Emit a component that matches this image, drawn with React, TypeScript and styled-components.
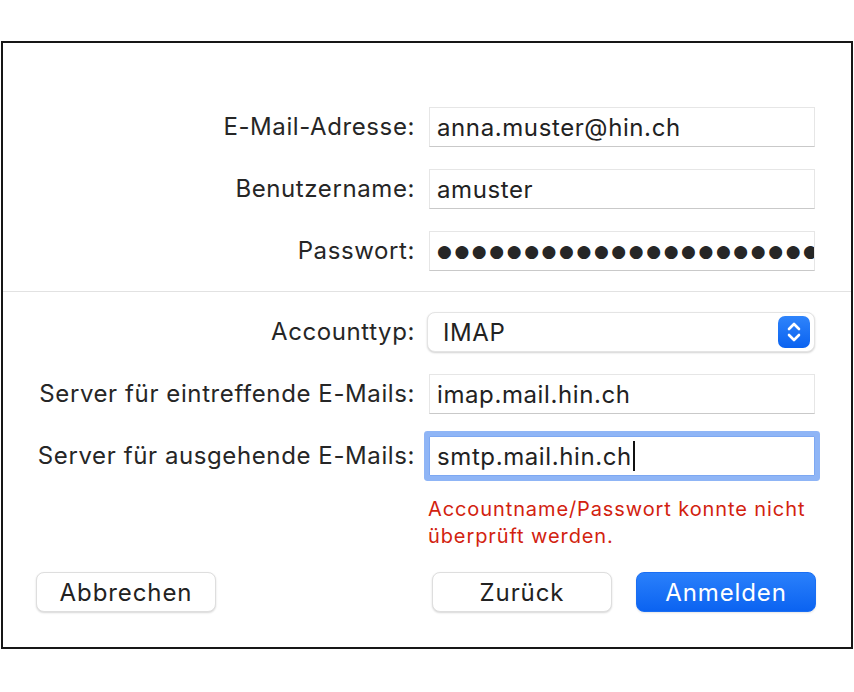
import React from "react";
import styled, { createGlobalStyle } from "styled-components";

const GlobalStyle = createGlobalStyle`
    body {
        margin: 0;
        background: #ffffff;
        font-family: Inter, "Liberation Sans", sans-serif;
        color: #262626;
    }
`;

const Frame = styled.div`
    box-sizing: border-box;
    width: 852px;
    height: 608px;
    margin: 41px 0 0 1px;
    border: 2px solid #161616;
    display: flex;
    flex-direction: column;
`;

const Form = styled.div<{ top: number }>`
    display: grid;
    grid-template-columns: 412px 386px;
    column-gap: 14px;
    row-gap: 22px;
    align-items: center;
    padding-top: ${props => props.top}px;
`;

const Label = styled.div`
    text-align: right;
    font-size: 24px;
    letter-spacing: 0.6px;
    line-height: 40px;
    white-space: nowrap;
`;

const Field = styled.div<{ focused?: boolean }>`
    box-sizing: border-box;
    height: 40px;
    padding: 0 7px;
    display: flex;
    align-items: center;
    background: #ffffff;
    border: 1px solid #e6e6e6;
    border-bottom-color: #c9c9c9;
    font-size: 24px;
    letter-spacing: 0.6px;
    color: #222222;
    overflow: hidden;
    white-space: nowrap;
    ${props =>
        props.focused &&
        `
        border-color: #7da8f2;
        box-shadow: 0 0 0 5px #8fb5f6;
        border-radius: 1px;
    `}
`;

const Dots = styled.span`
    font-family: "DejaVu Sans", sans-serif;
    font-size: 17px;
    letter-spacing: 2.6px;
    color: #262626;
`;

const Caret = styled.span`
    display: inline-block;
    width: 2px;
    height: 30px;
    background: #111111;
    margin-left: 1px;
`;

const Divider = styled.div`
    height: 1px;
    background: #e2e2e2;
    margin-top: 20px;
`;

const Popup = styled.div`
    box-sizing: border-box;
    height: 40px;
    margin-left: -2px;
    padding: 0 4px 0 15px;
    display: flex;
    align-items: center;
    justify-content: space-between;
    background: #ffffff;
    border: 1px solid #e4e4e4;
    border-radius: 8px;
    box-shadow: 0 1px 2px rgba(0, 0, 0, 0.18);
    font-size: 24px;
    letter-spacing: 0.6px;
    color: #222222;
`;

const Stepper = styled.div`
    width: 32px;
    height: 32px;
    border-radius: 7px;
    background: linear-gradient(#2f84fb, #0a62f0);
    display: flex;
    align-items: center;
    justify-content: center;
`;

const ErrorText = styled.div`
    margin: 20px 0 0 425px;
    font-size: 20px;
    letter-spacing: 0.9px;
    line-height: 27px;
    color: #d2220f;
`;

const Buttons = styled.div`
    display: flex;
    align-items: center;
    padding: 22px 35px 0 33px;
    gap: 24px;
`;

const Button = styled.div<{ primary?: boolean }>`
    box-sizing: border-box;
    width: 180px;
    height: 40px;
    border-radius: 8px;
    display: flex;
    align-items: center;
    justify-content: center;
    font-size: 24px;
    letter-spacing: 0.9px;
    background: ${props => (props.primary ? "linear-gradient(#2a80fb, #0b63f1)" : "#ffffff")};
    color: ${props => (props.primary ? "#ffffff" : "#222222")};
    border: 1px solid ${props => (props.primary ? "#1a6ef3" : "#dedede")};
    box-shadow: 0 1px 2px rgba(0, 0, 0, ${props => (props.primary ? 0.1 : 0.16)});
`;

const Spacer = styled.div`
    flex: 1;
`;

function StepperIcon() {
    return (
        <svg width="18" height="24" viewBox="0 0 18 24" fill="none">
            <path d="M4 9 L9 4 L14 9" stroke="#fff" strokeWidth="2.6" strokeLinecap="round" strokeLinejoin="round" />
            <path d="M4 15 L9 20 L14 15" stroke="#fff" strokeWidth="2.6" strokeLinecap="round" strokeLinejoin="round" />
        </svg>
    );
}

export default function App() {
    return (
        <>
            <GlobalStyle />
            <Frame>
                <Form top={64}>
                    <Label>E-Mail-Adresse:</Label>
                    <Field>anna.muster@hin.ch</Field>
                    <Label>Benutzername:</Label>
                    <Field>amuster</Field>
                    <Label>Passwort:</Label>
                    <Field>
                        <Dots>{"●".repeat(30)}</Dots>
                    </Field>
                </Form>
                <Divider />
                <Form top={20}>
                    <Label>Accounttyp:</Label>
                    <Popup>
                        IMAP
                        <Stepper>
                            <StepperIcon />
                        </Stepper>
                    </Popup>
                    <Label>Server für eintreffende E-Mails:</Label>
                    <Field>imap.mail.hin.ch</Field>
                    <Label>Server für ausgehende E-Mails:</Label>
                    <Field focused>
                        smtp.mail.hin.ch
                        <Caret />
                    </Field>
                </Form>
                <ErrorText>
                    Accountname/Passwort konnte nicht
                    <br />
                    überprüft werden.
                </ErrorText>
                <Buttons>
                    <Button>Abbrechen</Button>
                    <Spacer />
                    <Button>Zurück</Button>
                    <Button primary>Anmelden</Button>
                </Buttons>
            </Frame>
        </>
    );
}
